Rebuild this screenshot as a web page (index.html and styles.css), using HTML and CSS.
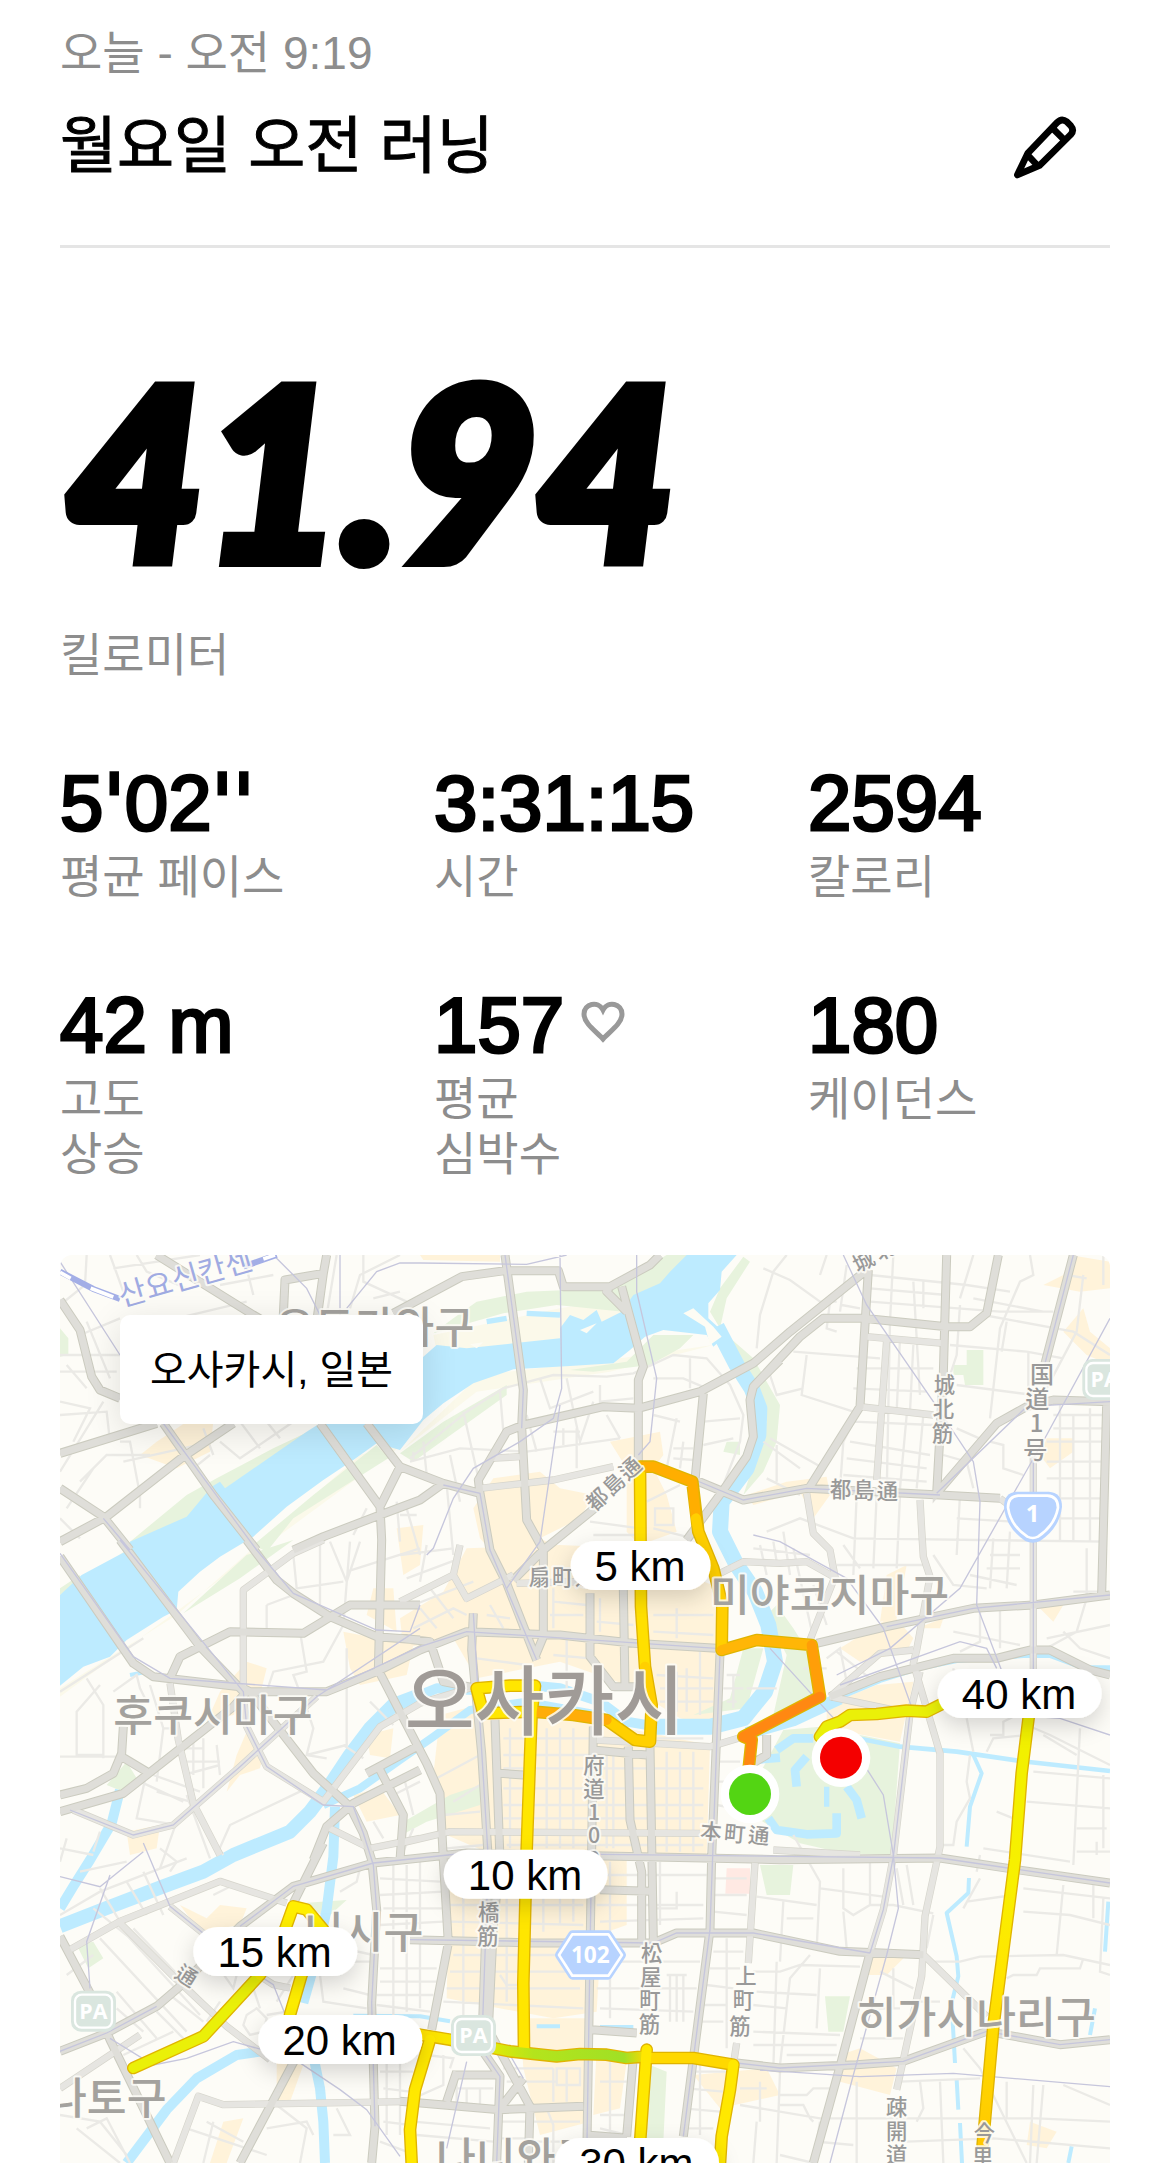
FILE: index.html
```html
<!doctype html>
<html lang="ko">

<head>
  <title>월요일 오전 러닝</title>
  <meta charset="utf-8" />
  <meta name="viewport" content="width=device-width, initial-scale=1" />
  <link rel="stylesheet" href="styles.css">
</head>

<body>
  <header class="run-header">
    <p class="muted">오늘 - 오전 9:19</p>
    <div class="title-row">
      <h1>월요일 오전 러닝</h1>
      <button class="edit" type="button" aria-label="이름 편집">
        <svg viewBox="60 65 210 210">
          <path d="M82 254 L113 189 L201 97 Q215 82 230 94 L242 106 Q254 120 242 133 L149 225 Z M188 114 L219 145 M111 192 L143 226" />
        </svg>
      </button>
    </div>
  </header>

  <main>
    <section class="distance">
      <p class="distance-value">41.94</p>
      <p class="muted">킬로미터</p>
    </section>

    <dl class="stats">
      <div class="stat">
        <dd>5<span class="tick">'</span>02<span class="tick">''</span></dd>
        <dt>평균 페이스</dt>
      </div>
      <div class="stat">
        <dd>3:31:15</dd>
        <dt>시간</dt>
      </div>
      <div class="stat">
        <dd>2594</dd>
        <dt>칼로리</dt>
      </div>
      <div class="stat">
        <dd>42 m</dd>
        <dt>고도<br>상승</dt>
      </div>
      <div class="stat">
        <dd>157
          <svg class="heart" viewBox="0 0 44 42">
            <path d="M22 38 C16 31 3 23 3 13 C3 3 17 -1 22 9 C27 -1 41 3 41 13 C41 23 28 31 22 38 Z" />
          </svg>
        </dd>
        <dt>평균<br>심박수</dt>
      </div>
      <div class="stat">
        <dd>180</dd>
        <dt>케이던스</dt>
      </div>
    </dl>

    <section class="map">
      <p class="place">오사카시, 일본</p>
      <svg class="map-canvas" viewBox="0 0 3150 2724">
        <defs>
          <filter id="shadow" x="-40%" y="-80%" width="180%" height="300%">
            <feDropShadow dx="0" dy="24" stdDeviation="34" flood-color="#000" flood-opacity=".16" />
          </filter>
          <linearGradient id="to-green" gradientUnits="userSpaceOnUse" x1="1080" y1="0" x2="1760" y2="0">
            <stop offset="0" stop-color="#ffe000" />
            <stop offset=".25" stop-color="#f3ec00" />
            <stop offset=".5" stop-color="#b4e41c" />
            <stop offset=".9" stop-color="#a0e025" />
            <stop offset="1" stop-color="#ffd800" />
          </linearGradient>
          <linearGradient id="to-south" gradientUnits="userSpaceOnUse" x1="0" y1="1355" x2="0" y2="2669">
            <stop offset="0" stop-color="#f0f000" />
            <stop offset=".4" stop-color="#f8f000" />
            <stop offset=".6" stop-color="#ffe600" />
            <stop offset="1" stop-color="#ffc800" />
          </linearGradient>
          <g id="pa">
            <rect width="135" height="123" rx="30" fill="#dae6df" />
            <rect x="12" y="12" width="111" height="99" rx="20" fill="none" stroke="#fff" stroke-width="7" />
            <text class="sign" x="67" y="84" font-size="64">PA</text>
          </g>
        </defs>

        <rect width="3150" height="2724" fill="#fdfcf7" />

        <!-- shopping and office districts -->
        <g class="district">
          <path d="M290 560 L380 500 460 500 450 590 350 640 240 600Z M1010 820 L1090 810 1080 930 1030 960Z M1080 0 L1320 0 1320 20 1090 15Z" />
          <path d="M1300 670 L1440 650 1500 700 1600 720 1560 790 1440 850 1500 880 1330 930 1260 850 1240 760Z" />
          <path d="M1650 560 L1800 530 1810 600 1780 640 1820 720 1850 830 1740 870 1700 830 1700 640Z" />
          <path d="M1220 880 L1500 870 1720 880 1860 950 1980 1000 1980 1420 1860 1390 1700 1290 1500 1220 1250 1270 1180 1150 1030 1180 1020 1090 1150 1010Z" />
          <path d="M850 1130 L1060 1170 1040 1260 900 1290 870 1240Z M940 1000 L1000 1000 1010 1130 920 1080Z M560 1220 L620 1240 600 1320 520 1380 440 1400 480 1310Z" />
          <path d="M560 1430 L610 1500 600 1540 540 1560 500 1610 530 1500Z M920 1440 L1000 1420 990 1510 930 1500Z M880 1620 L960 1600 1020 1680 920 1700Z" />
          <path d="M1140 1380 L1290 1340 1600 1400 1950 1470 1940 1800 1300 1800 1160 1740 1120 1560Z" />
          <path d="M1170 1810 L1700 1800 1700 2010 1500 2080 1620 2100 1610 2270 1480 2290 1160 2230Z" />
          <path d="M1380 2290 L1600 2290 1590 2600 1440 2640 1390 2440Z M1610 2380 L1700 2420 1680 2560 1600 2580Z M1900 2460 L2120 2440 2160 2520 1980 2560Z" />
          <path d="M360 1950 L440 1990 480 1950 560 1960 540 2010 420 2030Z M200 1730 L300 1710 290 1780 210 1800Z M490 2600 L550 2590 500 2724 450 2724Z M650 2420 L730 2430 690 2540 650 2540Z" />
          <path d="M2340 1180 L2500 1080 2560 1150 2540 1190 2400 1220Z M2480 960 L2540 930 2510 1090 2460 1100Z M2570 1120 L2650 1090 2640 1120Z M2300 1350 L2450 1290 2560 1280 2520 1460 2300 1420Z" />
          <path d="M3030 0 L3150 20 3150 100 3060 110 2950 90 3010 60Z M3070 160 L3090 230 3150 280 3150 330 3080 300 3010 230Z M2960 550 L3040 550 3040 590 2970 640 2940 600Z M2930 1050 L3010 1050 2980 1100Z" />
          <path d="M2180 680 L2300 665 2310 720 2260 790 2220 710 2080 750 2060 720Z M2430 2110 L2540 2100 2480 2160 2400 2160Z M2340 2400 L2400 2380 2510 2440 2490 2520 2340 2480Z M2910 2600 L2990 2630 2960 2680 2900 2670Z" />
        </g>

        <!-- river banks -->
        <g fill="#fbf9ea">
          <path d="M0 1040 L455 680 800 500 780 560 420 850 0 1060Z M0 1300 L350 1080 900 600 1040 560 430 1010 0 1325Z M1020 590 L1260 360 1680 310 1960 270 1650 350 1250 410Z M1120 240 L1500 160 1700 130 1690 230 1380 270 1130 290Z" />
        </g>
        <g class="park">
          <path d="M1120 235 L1180 190 1250 140 1400 110 1650 100 1720 60 1820 0 1900 0 1800 100 1690 170 1490 150 1330 175Z" />
          <path d="M210 860 L380 720 470 670 640 580 800 505 790 540 560 670 400 800 260 860Z M580 870 L760 720 950 570 985 610 700 790 620 890Z M370 1075 L560 900 700 855 540 970Z" />
          <path d="M1020 595 L1150 500 1340 390 1340 420 1060 620Z M1530 345 L1700 320 1780 240 1900 240 1860 280 1770 330 1600 350Z M1980 100 L2050 5 2070 20 2000 130 1980 220 1950 170Z" />
          <path d="M2000 240 L2080 310 2160 450 2150 560 2110 650 2050 720 2090 600 2120 500 2060 370Z M0 1000 L60 960 60 980 0 1020Z M0 220 L25 250 25 300 0 305Z M140 1590 L200 1520 230 1570 190 1610Z" />
          <path d="M2150 1050 L2200 1120 2250 1200 2280 1330 2200 1370 2140 1380 2180 1200 2120 1080Z M2050 1180 L2110 1180 2060 1360 1900 1380 2010 1330Z" />
          <path d="M2170 1425 L2280 1415 2520 1465 2495 1800 2350 1795 2220 1765 2100 1695 2100 1555Z" />
          <path d="M1040 1695 L1170 1620 1260 1590 1260 1650 1100 1700 1035 1735Z M1770 2430 L1820 2450 1810 2660 1750 2690Z M2100 1830 L2200 1830 2190 1920 2120 1920Z M2295 2224 L2370 2224 2350 2330 2305 2330Z" />
          <path d="M2720 285 L2770 285 2770 390 2715 390 2710 360 2680 360 2680 330 2720 330Z M730 1944 L860 1935 800 1990Z M50 2070 L100 2060 130 2110 85 2140Z M2000 560 L2040 560 2040 600 1990 590Z" />
        </g>
        <path fill="#ffe9e3" d="M2000 1840 L2070 1840 2070 1916 1996 1916Z" />

        <!-- water -->
        <g class="water">
          <path class="area" d="M0 1020 L65 960 195 890 210 860 380 785 455 695 480 680 495 700 560 655 740 530 780 505 1020 360 1090 305 1130 270 1220 280 1360 265 1500 250 1500 220 1530 180 1570 195 1610 165 1625 200 1685 170 1720 120 1800 85 1830 50 1880 0 2030 0 1985 50 1980 105 1945 145 1945 190 2000 240 1960 275 1940 240 1810 225 1755 245 1710 285 1660 325 1530 333 1360 343 1240 385 1150 445 1090 495 1020 585 950 565 880 615 790 675 680 755 580 845 480 905 420 950 355 1010 350 1065 310 1085 200 1155 150 1205 70 1235 0 1292Z" />
          <path stroke-width="48" d="M1970 215 L2030 330 2075 400 2098 460 2095 540 2060 640 1985 740 1980 830 2030 930 2085 1010 2125 1110 2145 1220 2115 1310 2050 1390 1950 1415 1780 1415" />
          <path stroke-width="30" d="M1790 1415 L1700 1400 1620 1340 1500 1300 1400 1290 1240 1305 1130 1300 1020 1345" />
          <path stroke-width="42" d="M1080 1320 L1000 1350 930 1420 870 1500 810 1590 750 1670 690 1730 520 1800 430 1850 310 1894 140 1959 0 2014" />
          <path stroke-width="24" d="M1700 1425 L1620 1380 1400 1340 1230 1365 1120 1445 1020 1515 900 1600 790 1650" />
          <path stroke-width="30" d="M825 1655 L820 1805 800 1964 770 2104 730 2244 M760 2404 L780 2500 790 2600 795 2724" />
          <path stroke-width="30" d="M180 1605 L155 1705 90 1815 40 1894 0 1960 M600 2390 L530 2400 410 2470 320 2564 200 2724" />
          <path stroke-width="12" d="M880 2282 L1080 2284 1170 2299 M1430 2314 H1500 M1620 2316 H1720 M260 1250 L210 1260" />
          <path stroke-width="38" d="M2060 1435 L2200 1395 2340 1330" />
          <path stroke-width="18" d="M2340 1325 L2460 1275 2570 1240 2690 1215 2890 1200 2970 1200 3080 1240 3150 1240" />
          <path stroke-width="14" d="M2370 1445 L2520 1475 2690 1490 2880 1518 3150 1548" />
          <path stroke-width="12" d="M2740 1500 L2765 1555 2730 1655 2720 1775 M2727 1869 L2725 1914 2660 1974 2690 2104 2695 2164 2675 2244 2685 2424 M2690 2474 L2695 2564 M2700 2604 L2706 2724 M3145 1940 L3135 2090 M3105 2260 L3090 2340 M3035 2674 L3025 2724" />
          <path stroke-width="26" d="M2150 1485 L2200 1450 2260 1450 M2080 1515 L2160 1508 M2210 1595 L2205 1545 2240 1505 M2360 1595 L2390 1635 2405 1690 M2125 1690 L2150 1725 2240 1738 2330 1735 2330 1675" />
          <path stroke-width="16" d="M2300 1595 V1655 M1280 200 L1340 190 M1400 175 L1500 180" />
        </g>
        <path fill="#fdfcf4" d="M1870 175 L1900 160 1960 215 1985 245 1950 270 1935 215Z M1560 225 L1610 205 1580 235Z M1230 268 L1270 262 1250 280Z" />

        <!-- side streets -->
        <g class="street">
          <path d="M150 0 L190 110 M80 0 L75 90 0 150 M160 40 L420 0 M230 0 L260 50 380 100 M550 0 L580 120 M480 90 L640 60 M350 190 L560 140 M60 240 L180 190 M0 300 H180 M0 350 H170 M20 330 L80 400 M0 440 L90 460 40 560 M80 200 L150 370 M0 480 L140 470 150 560 M130 440 L0 650 M60 680 L140 600 270 600 M180 560 L210 560 240 720 240 760 M100 640 L20 760 M0 790 L60 850 M400 640 L450 600" />
          <path d="M540 500 L600 580 M480 560 L540 610 700 500 M620 500 L660 550 M190 620 L460 560 M430 520 L460 600 M830 0 L800 180 M870 160 L900 60 1020 0 M940 130 L1020 110 M910 0 V80 L1040 140 M780 870 L830 820 M880 840 L920 760 M1010 740 L1020 860" />
          <path d="M1050 610 L1220 470 1330 400 1480 360 1640 365 1720 355 1840 300 1940 310 2010 390 2050 480 2040 560 1990 690 M1100 660 L1090 560 M1050 620 L1200 580 1400 590 1680 550 M1210 470 L1260 690 M1320 410 L1330 530 M1440 370 L1470 460 1600 410 M1520 370 L1560 560 1600 440 M1620 390 V440 L1720 430 M1480 530 H1560 M1510 520 V570 M1550 520 V640 M1400 480 L1430 590 M1640 480 L1680 550 M1780 480 L1860 500 M1780 370 L1870 370 1940 400 M1890 310 V400 M1850 490 L1820 640 M1840 580 H1900 M1840 610 L1900 615 M1870 560 L1860 640 M1930 500 L2040 490 M1930 570 L2020 550 M1060 590 V620" />
          <path d="M1785 760 H1840 V810 H1785Z M1760 740 L1860 690 M1780 820 L1900 850 M1590 800 L1740 820 M1600 840 H1730 M1610 880 H1720 M1200 740 L1170 600 M1160 690 L1180 900 M1040 760 L1080 900 M1020 780 H1070" />
          <path d="M2110 40 L2190 75 2280 140 2330 140 M2180 0 L2140 50 2100 180 2090 280 M2300 0 L2280 60 M2360 30 L2340 170 M2345 150 L2400 160 M2200 290 L2460 310 M2240 300 L2225 420 2380 470 M2130 360 L2150 420 2230 400 M2310 140 L2300 220 2330 230 M2500 0 L2490 200 2480 720 M2430 60 L2720 90 2850 110 M2430 100 L2660 120 M2430 140 L2820 170 2980 170 M2590 80 V160 M2560 80 L2580 420 M2700 150 L2690 300 2640 450 M2740 0 L2700 130 M2740 130 L2950 170 M2910 0 L2920 60 2880 80 2820 220 2790 490" />
          <path d="M2770 180 L3040 230 3150 300 M3070 60 L3050 230 2960 400 M2670 270 L2900 290 3010 310 M2840 200 L2825 290 M2690 390 L2920 420 M2905 290 V430 M3130 0 V90 M3020 60 L3080 70 M2390 340 H2620 M2380 400 L2600 410 M2520 250 L2510 470 M2560 270 L2550 470 M2380 500 L2620 510 M2370 560 L2610 600 M2360 610 L2600 640 M2350 660 L2600 680 M2540 480 L2520 700 M2590 480 L2570 700 M2390 480 L2350 560 2340 700 M2130 550 L2290 640 M2110 560 L2220 640 M2150 570 V680 M2120 670 L2220 720 M2650 600 L2720 620 2740 700 M2690 520 L2780 560 M2790 560 L2830 570 V640 L2890 660" />
          <path d="M2980 480 H3150 M2980 520 H3140 M2960 560 H3140 M2960 620 H3140 M2960 670 H3140 M2960 730 H3140 M2960 790 H3140 M3000 450 V860 M3040 480 V860 M3090 460 V860 M2120 830 L2220 790 2380 850 3140 860 M2080 880 L2250 900 M2390 720 L2380 960 M2450 720 L2440 940 M2520 720 L2510 940 M2700 720 L2690 900 M2690 790 L2860 800 M2800 850 L2790 1000 M2850 830 L2840 1000 M2620 900 L2680 990 2780 1000 M2330 930 L2600 930 M2350 870 L2400 940 M2100 870 L2120 960 M2140 860 L2150 920 M2170 830 L2190 960 M2790 900 H2880 M2780 940 H2880 M2730 960 L2870 990" />
          <path d="M3080 880 V1030 L3050 1130 2960 1180 M3010 1130 L3060 1180 3150 1210 M3040 1010 H3130 M2960 1150 L3150 1110 M2760 1070 V1160 L2700 1190 M2820 1060 V1180 M2680 1130 L2880 1170 M2300 1210 L2340 1180 2360 1280 M2230 1240 H2300 M2260 990 L2300 1110 M2200 880 L2260 1150 M2330 1190 L2430 1270 M2060 1300 L2150 1300" />
          <path d="M2680 1240 L2700 1360 M2720 1390 L2740 1490 M2790 1440 H2830 V1400 L2870 1380 M2780 1490 L2800 1450 2900 1440 M2900 1410 L2970 1440 3150 1530 M3060 1420 L3040 1830 M2950 1440 L3050 1500 M2900 1640 L3150 1660 M2920 1550 L3150 1570 M3130 1560 V1780 M3050 1720 H3140 M3050 1790 H3150 M2810 1670 L2860 1690 M2730 1500 L2720 1580 2730 1630 2690 1700 2680 1770 2650 1770 M2760 1800 L2750 1850 M2770 1780 L3030 1820 M3110 1760 V1800" />
          <path d="M0 1310 L250 1150 M120 1290 L50 1370 V1500 H130 M80 1270 L130 1350 V1510 M0 1505 H180 M160 1310 L230 1260 240 1300 260 1340 M270 1290 L310 1420 290 1580 M310 1420 H340 M240 1580 L370 1640 M280 1560 L420 1610 M370 1520 H480 M370 1560 L480 1530 M360 1480 H430 M400 1450 V1560 M430 1450 V1600 M470 1470 L480 1560 M290 1610 L390 1640 M490 1800 L420 1700 M260 1550 L230 1690 350 1710 M300 1840 L350 1700" />
          <path d="M620 1050 L700 1020 M620 1050 V1120 M700 900 L710 1000 850 980 M780 860 L780 1050 M810 860 L860 980 900 860 M860 950 L1080 880 M720 1130 L740 1250 700 1260 730 1340 M620 1310 L640 1250 790 1220 850 1110 870 860 M860 1180 V1470 L740 1500 M740 1360 L760 1420 740 1500 800 1510 M850 1470 L910 1510 M930 1340 L1000 1410 M740 1600 L510 1710 470 1800 M380 1620 L450 1810 M300 1780 L350 1820 330 1850 M960 1560 L1020 1650 M940 1700 L970 1750 M1000 1620 L1080 1580 M1030 1790 L1060 1720" />
          <path d="M0 1780 L100 1800 M20 1750 L0 1820 M120 1730 L100 1790 M60 1850 L200 1820 M0 1980 L120 1910 380 1810 M120 1900 L180 2000 M200 1880 L260 1980 M250 1850 L310 1980 M100 1960 L260 2090 M120 2050 L380 2330 M200 2040 L420 2280 M220 2020 L440 2250 M100 2100 L20 2160 M80 2210 L140 2300 M170 2210 L290 2350 M190 2400 L340 2330 M170 2260 L250 2330 M290 2270 L370 2350 M330 2220 L430 2300 M450 2100 L520 2200 540 2120 M460 1920 L520 1890" />
          <path d="M560 2280 L590 2260 620 2290 610 2330 570 2340 550 2310Z M620 2280 L680 2270 M580 2200 L600 2260 M440 2300 L480 2240 M0 2580 L120 2600 200 2700 M80 2620 L140 2590 210 2724 M50 2620 L180 2724 M440 2600 L550 2660 M380 2620 L620 2700 M460 2600 L430 2724 M600 2600 L540 2724 M650 2550 L740 2620 720 2724 M620 2620 L740 2600 760 2640 M830 2560 L870 2640 820 2640 M700 2160 L650 2240 M780 2160 L790 2240 920 2260 M860 2120 H930 M850 2080 L940 2100 M850 2200 L930 2220" />
          <path d="M960 1870 L1140 1880 M960 1920 L1150 1910 M970 1960 H1150 M960 2010 L1150 2000 M960 2140 H1130 M960 2180 H1130 M950 2220 H1120 M950 2250 L1110 2270 M1000 1830 V2280 M1040 1830 V2270 M1080 1820 V2260 M900 1840 L890 1880 840 1910 M960 2350 H1080 M960 2400 H1070 M960 2450 H1060 M970 2500 L1050 2510 M980 2330 V2640 M1020 2340 V2640 M970 2600 L1050 2610 M960 2660 L1040 2690" />
          <path d="M1170 1860 H1580 M1170 1900 L1570 1900 M1170 1950 H1570 M1170 2000 L1570 2010 M1180 2100 H1570 M1170 2150 H1570 M1160 2200 H1560 M1150 2240 L1570 2260 M1210 1820 V2290 M1500 1820 V2010 M1450 1830 V2030 M1540 1830 V2000 M1340 1820 V2240 M1610 1860 H1940 M1610 1950 H1930 M1620 2000 L1930 1990 M1610 2120 H1920 M1610 2200 H1910 M1620 2260 L1900 2270 M1650 1820 V2290 M1850 1910 V1960 H1790" />
          <path d="M1800 1820 V2010 M1830 2160 V2300 M1850 2160 V2300 M1870 2160 V2300 M1820 2160 H1880 M1960 1870 H2060 M1960 1920 H2060 M1960 1970 L2060 1980 M1960 2090 H2050 M1950 2140 H2040 M1940 2190 L2020 2200 M1930 2250 L2000 2250 M1920 2300 H1990 M2000 2050 V2380 M1320 2160 L1340 2190 H1390 M1900 2450 L2010 2450 M1880 2500 L1990 2510 M1870 2560 L1980 2570 M1860 2620 H1960 M1920 2430 V2640" />
          <path d="M1100 2400 L1180 2410 1170 2440 M1150 2400 V2490 L1060 2530 M1180 2500 H1300 M1190 2470 V2540 M1220 2500 V2560 M1260 2500 V2560 M1330 2440 L1480 2440 M1340 2480 H1490 M1460 2560 L1480 2610 1480 2724 M1480 2440 V2540 M1490 2440 H1560 V2490 H1490Z M1520 2440 V2540 M1060 2600 L1290 2620 M1070 2640 L1300 2660 M1620 2620 L1700 2640 M1620 2580 H1700 M1620 2480 H1700 M1650 2400 V2640 M1320 2600 H1400 M1320 2650 H1400 M1420 2600 H1560 M1420 2660 H1560" />
          <path d="M1330 1450 H1930 M1330 1500 L1590 1500 M1330 1540 H1930 M1330 1600 H1930 M1330 1650 H1930 M1330 1690 L1930 1690 M1340 1770 H1930 M1460 1420 V1780 M1500 1420 V1780 M1540 1420 V1780 M1640 1490 V1780 M1660 1490 V1780 M1820 1490 V1790 M1860 1490 V1790 M1900 1490 V1790 M1350 1420 V1780 M1180 1640 L1260 1590 M1130 1570 L1260 1500 M1150 1680 L1260 1670 M1030 1560 L1060 1680 M1160 1780 L1270 1770 M1980 1520 H2040 M1970 1580 H2040 M1970 1650 L2080 1670" />
          <path d="M1060 1120 L1180 1060 1220 1080 M1040 970 L1200 910 M1080 1060 L1130 1120 M1110 1000 L1180 1090 M1060 1050 L1240 980 M1020 900 L1180 880 M1100 870 L1080 980 M1280 1080 L1350 1090 M1290 1050 L1330 1120 M1250 1210 L1400 1230 M1470 1080 H1570 M1480 1040 L1580 1050 M1480 1200 L1590 1210 M1520 1150 V1300 M1480 1000 V1120 M1620 1030 V1130 M1610 1100 L1720 1110 M1780 1080 H1960 M1780 1130 L1960 1140 M1850 1060 V1150 M1790 1260 L1960 1270 M1800 1300 H1960 M1800 1340 H1960 M1850 1250 V1370 M1880 1240 V1370 M1820 1240 V1370 M1920 1190 V1380 M2000 1260 H2040 M1990 1300 H2050 M2000 1340 H2030 M2020 1260 V1360" />
          <path d="M2200 1740 L2280 1880 2270 2080 M2280 1900 L2470 1925 M2350 1840 L2350 1960 2380 1980 2430 1950 2500 1950 2620 1975 M2430 1820 V1950 M2090 1925 L2270 1950 M2170 1940 L2160 2120 M2180 1990 H2260 M2350 1970 L2360 2080 M2510 1840 L2530 1950 M2540 1830 L2560 1950 M2620 1980 L2600 2080 M2080 2150 L2160 2150 2220 2130 2400 2135 M2250 2100 L2190 2170 2160 2430 M2090 2210 L2270 2220 M2080 2250 L2180 2260 M2280 2140 L2270 2320 M2080 2370 L2330 2370 M2080 2330 L2340 2340 M2180 2400 H2330 M2150 2120 L2140 2440 M2460 2150 L2560 2200 M2500 2140 V2260" />
          <path d="M2600 2120 H2700 L2760 2105 3010 2100 3150 2130 M2840 2170 L2860 2160 2930 2160 2940 2140 3060 2140 3070 2110 M2890 1900 L3150 1930 M2890 1970 L3030 1980 3150 2010 M3010 1890 L2990 2100 M3130 1930 L3120 2150 3150 2160 M3100 1890 V1990 M2720 1940 L2860 1920 M2760 1870 L2710 1960 M2710 2380 L2760 2440 2900 2724 M2160 2450 L2150 2724 M2160 2520 H2240 L2260 2500 H2310 M2160 2550 L2230 2550 2250 2590 2260 2600 M2040 2550 L2280 2590 2560 2590 2930 2590 3150 2600 M2390 2480 V2724 M2580 2480 L2590 2560 2570 2600 M2640 2480 L2650 2724" />
          <path d="M2520 2480 L2760 2470 M2840 2480 V2590 M2920 2490 L2910 2724 M2950 2490 L2930 2724 M3010 2490 L3150 2550 M2540 2660 L2800 2650 3150 2680 M2280 2600 L2270 2660 2380 2670 M2100 2480 V2600 M2040 2500 H2120 M2160 2700 L2260 2724 M2090 2600 L2080 2724 M2420 2260 H2520 M2540 2240 H2640 M2400 2350 H2530" />
        </g>

        <!-- secondary roads: dark casing first, light fill over it -->
        <g class="road light">
          <path id="roads-light" d="M550 1295 L550 1005 700 895 790 855 M1260 700 L1480 675 1660 635 M1290 610 L1380 605 M2480 255 L2450 675 M2420 245 L2650 265 M2400 455 L2620 480 M2240 715 L2260 835 2310 885 2325 965 2250 1155 M2820 730 L2860 760 M2580 735 L2585 825 2590 905 2610 965 2570 1185 2560 1225 2640 1495 2640 1775 2595 1984 2585 2164 2530 2414 2510 2504 M2590 2099 L2780 2284 M2920 605 V1245 M2310 1325 L2550 1375 2500 1805 2470 1964 2430 2094 M2550 1375 L2580 1250 M330 1285 L355 1455 400 1645 480 1800 M40 1665 L220 1740 340 1710 540 1535 770 1325 M30 2084 L180 1999 480 1879 680 1944 M180 2004 L340 2164 500 2314 630 2414 M800 1715 L930 1780 1080 1750 M550 1315 L560 1415 620 1535 790 1640 960 1415 1080 1345 1260 1290 M1020 1040 L1180 960 1200 870 M1180 960 L1220 1030 1360 960 M1610 1455 L1950 1475 2050 1445 M1020 1765 L1170 1730 1920 1735 M1610 1600 V1560 M2085 1824 L2065 2124 M2030 2364 L2020 2430 M340 2724 L415 2524 490 2549 1080 2539 M330 1954 L540 2124 640 2189 690 2199 M240 2340 L0 2500 M2310 1325 L2460 1195 2560 1185 M1370 985 L1560 980 M1970 960 L2050 920 2160 925 2240 920 2320 965 M2140 1785 L2400 1800" />
        </g>
        <g class="road">
          <path id="roads" d="M0 135 L60 225 95 365 120 405 180 430 M290 0 L580 180 700 250 M0 595 L290 505 M0 860 L140 785 370 605 520 505 M0 700 L130 785 210 885 M310 505 L460 720 590 885 M180 855 L420 1175 550 1310 M560 855 L650 975 700 1015 810 1085 950 1145 1080 1155 M0 905 L220 1225 280 1265 540 1295 570 1310 800 1310 950 1250 1080 1185 1220 1130 1500 1140 1720 1165 1970 1180 M800 0 L790 55 770 200 M670 180 L675 75 790 55 M780 505 L960 755 965 855 955 1245 1100 1525 1140 1615 1150 1815 1165 2064 1115 2324 M920 505 L1020 635 1150 685 1260 715 1290 885 1340 985 1430 1215 M960 755 L1020 635 M700 885 L790 845 960 780 1080 735 1150 685 M1335 0 L1390 405 1385 515 1400 795 1450 885 1450 1145 1425 1205 M1000 175 L1205 65 1335 47 1495 47 1510 95 1650 95 1770 30 1800 0 M1650 95 L1640 110 1700 170 M1685 95 L1750 335 1735 375 1735 635 M1260 715 L1255 675 1340 530 1390 510 1630 455 1735 460 1920 410 2080 325 2190 230 2420 45 M2160 315 L2080 395 2070 435 2080 545 2060 605 1990 705 1880 855 M2080 395 L2220 245 2290 190 2410 190 2660 215 2730 215 2780 175 2815 0 M1930 415 L1905 675 2050 735 2240 700 2640 720 2820 730 M2425 45 L2400 455 2250 695 M2660 0 L2650 355 2630 715 2810 505 2900 455 2980 435 3150 440 M3040 0 L2955 325 M3140 445 L3125 1015 M2270 1165 L2480 1115 2740 1060 2920 1050 3150 1020 M2310 1325 L2460 1265 2680 1210 2810 1210 2910 1185 2970 1185 3090 1245 3150 1260 M2430 2094 L2340 2434 2260 2724 M0 2389 L140 2334 290 2254 360 2194 540 2014 700 1894 940 1824 1220 1794 2160 1814 2640 1809 2870 1844 3150 1884 M1050 2054 L1420 2064 1780 2064 1850 2034 2080 2034 2340 2089 2590 2099 M2030 2424 L2160 2439 2390 2429 2530 2419 2780 2329 3000 2369 3150 2354 M1240 1075 L1235 1185 1265 1495 1285 1815 1265 2384 1320 2464 1310 2724 M1305 1395 L1320 1815 1300 2014 1285 2324 1410 2554 1405 2724 M1600 1415 L1595 1784 1580 2724 M1690 1005 L1695 1295 M1705 1475 L1710 1695 1745 1850 1745 2064 M1770 1475 L1780 2054 M1720 2404 L1700 2644 M1980 1195 L1955 1805 1950 2024 1870 2644 M330 1270 L360 1205 510 1130 730 1135 870 1050 1080 1050 M0 1620 L80 1600 160 1555 185 1495 190 1415 M0 1670 L190 1615 520 1355 560 1310 M185 1505 L260 1550 M570 1310 L760 1555 870 1655 910 1735 935 1815 950 1964 935 2244 945 2614 935 2724 M760 1815 L800 1715 880 1645 1080 1545 M790 1764 L700 1944 M960 1545 L1030 1680 1020 1815 M920 1555 L1070 1475 M0 2044 L90 2214 150 2354 330 2724 M710 2404 L540 2724 M1610 755 L1450 885 1360 975 M1590 1015 L1590 1205 1660 1295 1730 1295 M1020 1150 L1110 1160 1150 1280 1250 1300 M1600 1485 L1760 1500 M1320 1555 L1390 1560 M1620 1904 L1770 1909 M1595 2324 L1730 2334 M1020 2539 L1320 2564 1570 2554 M1180 2460 H1310 M1190 2450 L1160 2540 M1390 2470 L1320 2560 M1580 2640 L1700 2650 M2120 1440 V1500 L2070 1530" />
        </g>
        <use href="#roads-light" class="fill-light" />
        <use href="#roads" class="fill-main" />

        <!-- railways -->
        <g class="rail">
          <path d="M0 20 L180 300 M640 0 L740 100 780 180 M840 180 L840 0 M860 160 L950 50 1020 24 1080 24 1400 28 1520 0 M1730 0 L1730 110 1790 370 1770 560 1735 600 M1500 0 L1505 400 1480 490 1380 560 1240 640 1180 730 1120 880 1100 900 M1500 450 L1440 860 1340 1000 M2350 0 L2420 150 2620 440 2740 620 2760 740 2750 1050 2830 1260 M3150 190 L2960 540 2700 1000 2490 1180 2330 1260 M2080 840 L2160 860 2360 970 2470 1120 2560 1370 M2130 1180 L2330 1400 2470 1620 2500 1800 2515 1960 2480 2100 2380 2460 2310 2724 M2100 2445 L2400 2465 2680 2455 3150 2495 M2340 1290 L2700 1160 2780 1180 2810 1240 M2850 1380 L3000 1390 3150 1440" />
          <path d="M30 1665 L220 1740 340 1710 540 1535 770 1325 1080 1120 M130 790 L210 885 M310 505 L590 885 700 1015 950 1125 1050 1130 1080 1050 M180 855 L550 1310 560 1415 620 1535 790 1650 880 1655 910 1735 940 1830 950 1964 935 2244 945 2614 M0 895 L220 1205 330 1270 800 1305 1080 1175 1220 1130 1970 1180 M1240 1075 L1285 1815 1265 2384 1320 2464 1310 2724 M1335 0 L1390 405 1385 520 M1150 690 L1260 715 1290 885 1430 1215 M1595 1784 L1580 2724 M1980 1195 L1950 2024 1870 2644 M0 2389 L140 2334 290 2254 M540 2014 L700 1894 940 1824 1220 1794 2640 1809 3150 1884 M1050 2054 L1780 2064 1850 2034 2080 2034 2430 2094 M2550 1375 L2500 1805 2470 1964 2430 2094 M2030 2424 L2160 2439 2530 2419 2780 2329 3000 2369 3150 2354 M3040 0 L2955 325 M2920 605 V1245 M2630 715 L2900 455 3150 440 M1905 675 L2050 735 2240 700 2640 720 M2480 1115 L2740 1060 3150 1020" />
          <path d="M0 1865 L120 1895 250 1790 M150 1860 L80 2060 90 2200 M250 1764 L330 1954 540 2124 640 2189 700 2340 M150 2350 L280 2430 380 2410 520 2360 700 2410 840 2504 920 2564 1020 2704 M1220 2420 L1160 2680 M1350 2400 L1390 2470" />
        </g>
        <path fill="none" stroke="#a3aee6" stroke-width="18" d="M0 50 L100 102 180 132 M550 35 L650 0" />
        <path fill="none" stroke="#fff" stroke-width="11" d="M0 52 L32 70 M92 100 L160 126 M610 12 L645 0" />

        <!-- run route -->
        <g class="route-edge">
          <path d="M2065 1550 L2075 1455 2050 1445 2280 1325 2255 1170 2090 1155 1985 1185 1987 1050 1960 940 1915 830 1897 680 1780 635 1740 635 1743 1055 1755 1235 1775 1350 1770 1460 1725 1455 1640 1395 1540 1380 1420 1370 1270 1375 1250 1300 1350 1292 1425 1292 1415 1370 1400 1785 1390 2184 1392 2384" />
          <path d="M1080 2339 L1170 2354 1350 2389 1490 2404 1560 2397 1640 2399 1700 2409 1760 2404 M1760 2384 L1740 2664 M1760 2409 L1900 2409 2020 2429 2010 2504 1985 2644 1980 2724 M1110 2354 L1065 2504 1050 2624 1055 2724" />
          <path d="M220 2439 L430 2344 600 2159 675 2024 700 1954 740 1964 790 2024 725 2159 690 2279" />
          <path d="M2280 1445 L2300 1415 2340 1400 2370 1380 2450 1377 2540 1367 2600 1370 2660 1340 M2910 1355 L2885 1555 2865 1815 2830 2084 2800 2314 2775 2594 2768 2669" />
        </g>
        <g class="route">
          <path stroke="#ffe000" d="M1740 635 L1743 1055 1755 1235" />
          <path stroke="#ffd000" d="M1755 1235 L1775 1350 1770 1460 1725 1455 1640 1395" />
          <path stroke="#ffad08" d="M1640 1395 L1540 1380 1420 1370" />
          <path stroke="#ffe600" d="M1415 1370 L1270 1375 1250 1300 1350 1292 1425 1292 1415 1370 1400 1785 1390 2184 1392 2384" />
          <path stroke="#ffae00" d="M1740 635 L1780 635 1897 680 1908 790" />
          <path stroke="#ffcf00" d="M1908 790 L1915 830 1960 940 1987 1050 1985 1185" />
          <path stroke="#ffb607" d="M1985 1185 L2090 1155 2255 1170" />
          <path stroke="#ff9e08" d="M2255 1170 L2280 1325" />
          <path stroke="#ff8812" d="M2280 1325 L2050 1445 2075 1455 2065 1550" />
          <path stroke="url(#to-green)" d="M1080 2339 L1170 2354 1350 2389 1490 2404 1560 2397 1640 2399 1700 2409 1760 2404" />
          <path stroke="#ffd800" d="M1760 2409 L1900 2409 2020 2429" />
          <path stroke="#ffe800" d="M1760 2384 L1740 2664 M2020 2429 L2010 2504 1985 2644 1980 2724 M1110 2354 L1065 2504 1050 2624 1055 2724" />
          <path stroke="#eaf008" d="M220 2439 L430 2344 600 2159" />
          <path stroke="#ffee00" d="M600 2159 L675 2024 700 1954 740 1964 790 2024 725 2159 690 2279" />
          <path stroke="#eaf008" d="M2280 1445 L2300 1415 2340 1400 2370 1380 2450 1377 2540 1367 2600 1370 2660 1340" />
          <path stroke="url(#to-south)" d="M2910 1355 L2885 1555 2865 1815 2830 2084 2800 2314 2775 2594 2768 2669" />
        </g>

        <!-- place names -->
        <g class="ward">
          <text x="645" y="265">요도가와구</text>
          <text x="160" y="1429">후쿠시마구</text>
          <text x="1950" y="1067">미야코지마구</text>
          <text x="2390" y="2335">히가시나리구</text>
          <text x="731" y="2078">니시구</text>
          <text x="-39" y="2577">나토구</text>
          <text x="1128" y="2757">나니와구</text>
          <text class="city" x="1034" y="1422">오사카시</text>
        </g>
        <text class="line-name" transform="translate(186 156) rotate(-16)">산요신칸센</text>
        <g class="street-name">
          <text x="2310 2380 2450" y="727 729 731">都島通</text>
          <text x="2621 2618 2615" y="414 486 558">城北筋</text>
          <text class="wide" x="2910 2896 2909 2890" y="385 460 530 612">国道1号</text>
          <text x="0 75" y="0" transform="translate(2393 54) rotate(-28)">城北</text>
          <text x="0 68 136" y="0" transform="translate(1604 772) rotate(-43)">都島通</text>
          <text x="1406 1476 1546" y="990">扇町通</text>
          <text x="1570 1570 1584 1584 1584" y="1554 1626 1694 1765 1836">府道102</text>
          <text x="0 72 144" y="0" transform="translate(1919 1750) rotate(5)">本町通</text>
          <text x="1254 1251" y="1994 2066">橋筋</text>
          <text x="1743 1740 1738 1736" y="2119 2189 2259 2332">松屋町筋</text>
          <text x="2026 2018 2008" y="2188 2260 2336">上町筋</text>
          <text x="2478 2478 2478" y="2579 2652 2724">疎開道</text>
          <text x="2741 2736" y="2657 2730">今里</text>
          <text transform="translate(340 2165) rotate(32)">通</text>
        </g>

        <!-- road signs -->
        <use href="#pa" x="1173" y="2280" />
        <use href="#pa" x="33" y="2207" />
        <use href="#pa" x="3067" y="312" />
        <path fill="#b7d3ff" d="M2870 710 H2966 Q3006 712 3006 756 Q2998 820 2940 858 Q2918 868 2896 858 Q2838 820 2832 756 Q2832 712 2870 710Z" />
        <path fill="none" stroke="#fff" stroke-width="8" d="M2875 722 H2962 Q2994 724 2994 758 Q2984 812 2934 845 Q2918 853 2902 845 Q2852 812 2844 758 Q2844 724 2875 722Z" />
        <text class="sign" x="2918" y="802" font-size="72">1</text>
        <path fill="#b7d3ff" stroke="#b7d3ff" stroke-width="24" stroke-linejoin="round" d="M1497 2100 L1537 2038 H1645 L1686 2100 1645 2162 H1537Z" />
        <path fill="none" stroke="#fff" stroke-width="8" stroke-linejoin="round" d="M1497 2100 L1537 2038 H1645 L1686 2100 1645 2162 H1537Z" />
        <text class="sign" x="1591" y="2124" font-size="68">102</text>

        <!-- start and finish -->
        <circle cx="2070" cy="1617" r="88" fill="#fff" />
        <circle cx="2070" cy="1617" r="63" fill="#53d513" />
        <circle cx="2343" cy="1508" r="88" fill="#fff" />
        <circle cx="2343" cy="1508" r="63" fill="#f40000" />

        <!-- distance markers -->
        <g class="marker">
          <g filter="url(#shadow)">
            <rect x="1532" y="858" width="420" height="147" rx="74" />
            <rect x="2633" y="1242" width="492" height="147" rx="74" />
            <rect x="1151" y="1784" width="492" height="147" rx="74" />
            <rect x="400" y="2016" width="492" height="147" rx="74" />
            <rect x="595" y="2280" width="492" height="147" rx="74" />
            <rect x="1485" y="2649" width="492" height="147" rx="74" />
          </g>
          <text x="1740" y="978">5 km</text>
          <text x="2877" y="1362">40 km</text>
          <text x="1395" y="1904">10 km</text>
          <text x="644" y="2136">15 km</text>
          <text x="839" y="2400">20 km</text>
          <text x="1729" y="2769">30 km</text>
        </g>
      </svg>
    </section>
  </main>
</body>

</html>
```
FILE: styles.css
```css
* {
  box-sizing: border-box;
}

body {
  margin: 0;
  height: 100vh;
  padding: 26px 60px 0;
  display: flex;
  flex-direction: column;
  overflow: hidden;
  background: #fff;
  color: #000;
  font-family: "Liberation Sans", "Noto Sans CJK KR", sans-serif;
  font-size: 46px;
  line-height: 55px;
}

p,
h1,
dl,
dd {
  margin: 0;
}

.muted,
dt {
  color: #8d8d8d;
}

.run-header {
  padding-bottom: 52px;
  border-bottom: 3px solid #e5e5e5;
}

.title-row {
  display: flex;
  align-items: center;
  justify-content: space-between;
  margin-top: 20px;
  padding-right: 30px;
}

h1 {
  font-size: 62px;
  line-height: 92px;
  font-weight: 400;
  -webkit-text-stroke: 1px #000;
}

.edit {
  width: 70px;
  height: 70px;
  padding: 0;
  border: 0;
  background: none;
}

.edit svg {
  display: block;
  width: 100%;
  fill: none;
  stroke: #000;
  stroke-width: 20;
  stroke-linejoin: round;
}

main {
  flex: 1;
  min-height: 0;
  display: flex;
  flex-direction: column;
}

.distance {
  padding-top: 84px;
}

.distance-value {
  padding: 0 0 22px 6px;
  font-family: Lato, sans-serif;
  font-size: 238px;
  line-height: 274px;
  font-weight: 900;
  font-style: italic;
  -webkit-text-stroke: 12px #000;
}

.stats {
  display: grid;
  grid-template-columns: repeat(3, 1fr);
  gap: 73px 72px;
  padding: 73px 0 73px;
}

.stat {
  display: flex;
  flex-direction: column;
}

.stat dd {
  display: flex;
  align-items: center;
  font-size: 78px;
  line-height: 94px;
  -webkit-text-stroke: 3px #000;
}

.tick {
  font-family: "DejaVu Sans", sans-serif;
}

.heart {
  width: 44px;
  height: 42px;
  margin: 0 0 6px 17px;
  fill: none;
  stroke: #999;
  stroke-width: 5;
}

.map {
  position: relative;
  flex: 1;
  min-height: 0;
  overflow: hidden;
  border-radius: 12px 12px 0 0;
}

.map-canvas {
  display: block;
  width: 100%;
  height: auto;
}

.place {
  position: absolute;
  top: 60px;
  left: 60px;
  padding: 28px 30px 26px;
  border-radius: 10px;
  background: #fff;
  box-shadow: 0 8px 36px rgba(0, 0, 0, .12);
  font-size: 40px;
}

.district {
  fill: #fff3da;
}

.park {
  fill: #e7f3dd;
}

.water {
  fill: none;
  stroke: #bdebff;
  stroke-linejoin: round;
}

.water .area {
  fill: #bdebff;
  stroke: none;
}

.street {
  fill: none;
  stroke: #ebeae6;
  stroke-width: 7;
}

.road {
  fill: none;
  stroke: #cbcbbf;
  stroke-width: 27;
  stroke-linejoin: round;
}

.road.light {
  stroke: #d6d5cc;
  stroke-width: 22;
}

.fill-light {
  fill: none;
  stroke: #e6e5e1;
  stroke-width: 18;
}

.fill-main {
  fill: none;
  stroke: #dfded9;
  stroke-width: 21;
}

.rail {
  fill: none;
  stroke: #c6c6dc;
  stroke-width: 4;
}

.route,
.route-edge {
  fill: none;
  stroke-linecap: round;
  stroke-linejoin: round;
}

.route-edge {
  stroke: #e0b400;
  stroke-width: 38;
}

.route {
  stroke-width: 30;
}

.ward,
.line-name,
.street-name {
  font-family: "Noto Sans CJK KR", sans-serif;
  paint-order: stroke;
  stroke: #fdfcf7;
  stroke-opacity: .85;
  stroke-width: 12;
  stroke-linejoin: round;
}

.ward {
  fill: #a4a29e;
  font-size: 130px;
  font-weight: 500;
}

.city {
  fill: #a09b97;
  font-size: 228px;
}

.line-name {
  fill: #a0abe2;
  font-size: 90px;
}

.street-name {
  font-family: "Noto Sans CJK JP", sans-serif;
  fill: #999;
  font-size: 64px;
  font-weight: 500;
}

.wide {
  font-size: 72px;
}

.sign {
  fill: #fff;
  font-family: "Open Sans", sans-serif;
  font-weight: 700;
  text-anchor: middle;
}

.marker rect {
  fill: #fff;
}

.marker text {
  fill: #000;
  font-size: 126px;
  text-anchor: middle;
}
```
